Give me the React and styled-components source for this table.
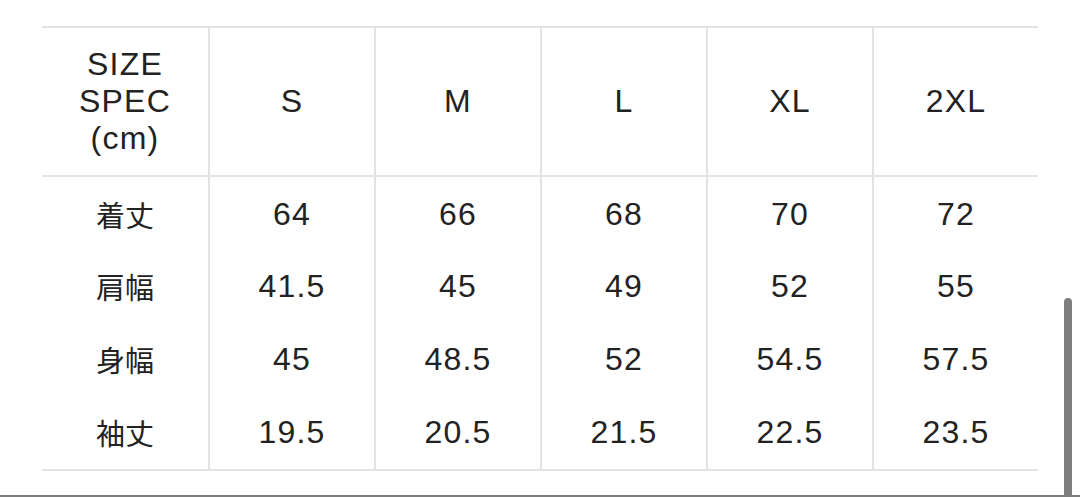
import React from "react";
import styled, { createGlobalStyle } from "styled-components";

const Global = createGlobalStyle`
  html, body { margin: 0; padding: 0; background: #fff; }
  body { font-family: "Liberation Sans", "Noto Sans CJK JP", sans-serif; }
`;

const Page = styled.div`
  position: relative;
  width: 1080px;
  height: 497px;
  box-sizing: border-box;
  padding: 26px 0 0 42px;
  border-bottom: 2px solid #7c7c7c;
  overflow: hidden;
  background: #fff;
`;

const Table = styled.div`
  width: 996px;
  display: grid;
  grid-template-columns: repeat(6, 1fr);
  border-top: 2px solid #e3e3e3;
  border-bottom: 2px solid #e3e3e3;
  color: #222;
`;

const Cell = styled.div`
  box-sizing: border-box;
  height: ${(p) => (p.$head ? "149px" : "73px")};
  display: flex;
  align-items: center;
  justify-content: center;
  text-align: center;
  font-size: 32px;
  letter-spacing: 1.2px;
  line-height: 37px;
  border-left: ${(p) => (p.$first ? "none" : "2px solid #e3e3e3")};
  border-bottom: ${(p) => (p.$head ? "2px solid #e3e3e3" : "none")};
  padding-top: ${(p) => (p.$head ? "0" : p.$firstRow ? "2px" : "0")};
`;

const Label = styled.span`
  font-family: "Noto Sans CJK JP", sans-serif;
  font-size: 29px;
  letter-spacing: 0;
`;

const Scrollbar = styled.div`
  position: absolute;
  left: 1064px;
  top: 298px;
  width: 8px;
  height: 200px;
  background: #7f7f7f;
  border-radius: 4px 4px 0 0;
`;

const sizes = ["S", "M", "L", "XL", "2XL"];
const rows = [
  ["着丈", ["64", "66", "68", "70", "72"]],
  ["肩幅", ["41.5", "45", "49", "52", "55"]],
  ["身幅", ["45", "48.5", "52", "54.5", "57.5"]],
  ["袖丈", ["19.5", "20.5", "21.5", "22.5", "23.5"]],
];

export default function App() {
  return (
    <>
      <Global />
      <Page>
        <Table>
          <Cell $head $first>
            SIZE
            <br />
            SPEC
            <br />
            (cm)
          </Cell>
          {sizes.map((s) => (
            <Cell $head key={s}>
              {s}
            </Cell>
          ))}
          {rows.map(([label, vals], ri) => (
            <React.Fragment key={label}>
              <Cell $first $firstRow={ri === 0}>
                <Label>{label}</Label>
              </Cell>
              {vals.map((v, i) => (
                <Cell key={i} $firstRow={ri === 0}>
                  {v}
                </Cell>
              ))}
            </React.Fragment>
          ))}
        </Table>
        <Scrollbar />
      </Page>
    </>
  );
}
